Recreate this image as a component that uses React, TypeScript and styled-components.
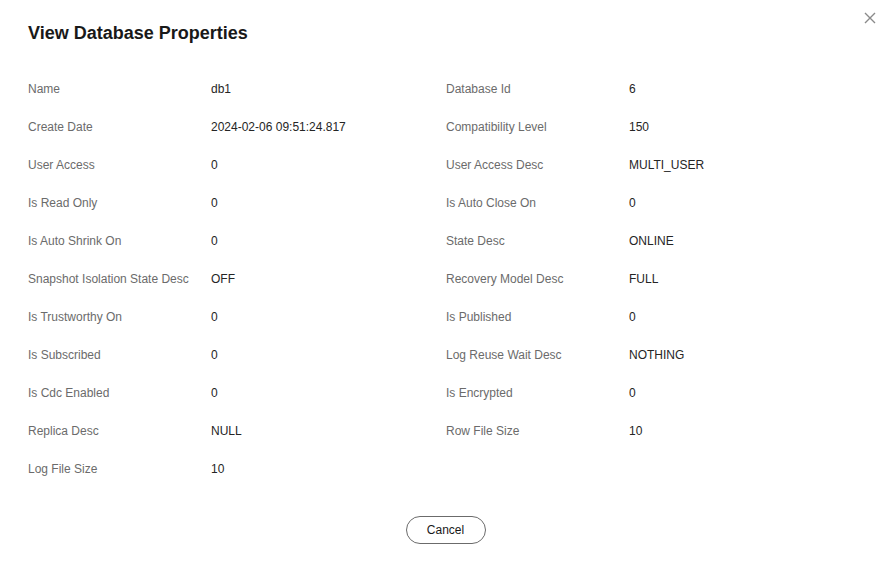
import styled, { createGlobalStyle } from "styled-components";

const GlobalStyle = createGlobalStyle`
    html, body {
        margin: 0;
        padding: 0;
        background: #ffffff;
        font-family: "Liberation Sans", Arial, sans-serif;
    }
`;

const Dialog = styled.div`
    position: relative;
    width: 889px;
    height: 569px;
    box-sizing: border-box;
    padding: 22px 26px 0 28px;
    background: #ffffff;
    display: flex;
    flex-direction: column;
`;

const Title = styled.h2`
    margin: 0;
    font-size: 18px;
    line-height: 22px;
    font-weight: 700;
    color: #191919;
`;

const CloseBtn = styled.button`
    position: absolute;
    top: 10px;
    right: 11px;
    width: 16px;
    height: 16px;
    padding: 0;
    border: none;
    background: transparent;
    display: flex;
    align-items: center;
    justify-content: center;
    cursor: pointer;
`;

const Grid = styled.div`
    margin-top: 38px;
    display: grid;
    grid-template-columns: 418px 1fr;
    grid-auto-rows: 38px;
`;

const Row = styled.div`
    display: flex;
    align-items: flex-start;
    font-size: 12px;
    line-height: 14px;
`;

const Label = styled.span`
    flex: 0 0 183px;
    color: #6b6b6b;
`;

const Value = styled.span`
    color: #252525;
`;

const Footer = styled.div`
    margin-top: 16px;
    display: flex;
    justify-content: center;
`;

const CancelBtn = styled.button`
    width: 80px;
    height: 28px;
    border: 1px solid #6b6b6b;
    border-radius: 14px;
    background: #ffffff;
    color: #191919;
    font-family: "Liberation Sans", Arial, sans-serif;
    font-size: 12px;
    cursor: pointer;
`;

const props: [string, string][] = [
    ["Name", "db1"],
    ["Database Id", "6"],
    ["Create Date", "2024-02-06 09:51:24.817"],
    ["Compatibility Level", "150"],
    ["User Access", "0"],
    ["User Access Desc", "MULTI_USER"],
    ["Is Read Only", "0"],
    ["Is Auto Close On", "0"],
    ["Is Auto Shrink On", "0"],
    ["State Desc", "ONLINE"],
    ["Snapshot Isolation State Desc", "OFF"],
    ["Recovery Model Desc", "FULL"],
    ["Is Trustworthy On", "0"],
    ["Is Published", "0"],
    ["Is Subscribed", "0"],
    ["Log Reuse Wait Desc", "NOTHING"],
    ["Is Cdc Enabled", "0"],
    ["Is Encrypted", "0"],
    ["Replica Desc", "NULL"],
    ["Row File Size", "10"],
    ["Log File Size", "10"],
];

function App() {
    return (
        <>
            <GlobalStyle />
            <Dialog>
                <Title>View Database Properties</Title>
                <CloseBtn aria-label="close">
                    <svg width="12" height="12" viewBox="0 0 12 12">
                        <path d="M1 1L11 11M11 1L1 11" stroke="#8a8a8a" strokeWidth="1.4" />
                    </svg>
                </CloseBtn>
                <Grid>
                    {props.map(([k, v]) => (
                        <Row key={k}>
                            <Label>{k}</Label>
                            <Value>{v}</Value>
                        </Row>
                    ))}
                </Grid>
                <Footer>
                    <CancelBtn>Cancel</CancelBtn>
                </Footer>
            </Dialog>
        </>
    );
}

export default App;
